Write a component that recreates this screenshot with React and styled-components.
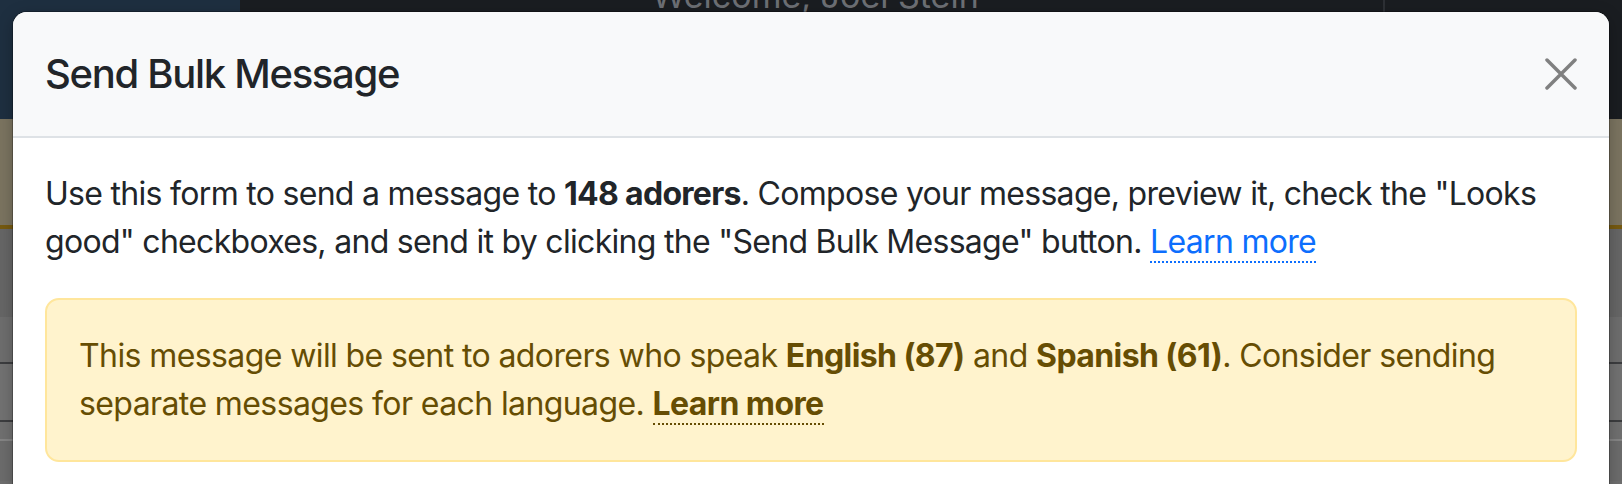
import styled, { createGlobalStyle } from "styled-components";

const GlobalStyle = createGlobalStyle`
  html, body {
    margin: 0;
    padding: 0;
    background: #6f6f6f;
  }
  * {
    box-sizing: border-box;
  }
`;

const Page = styled.div`
  position: relative;
  width: 1622px;
  height: 484px;
  overflow: hidden;
  font-family: Inter, "Noto Sans", sans-serif;
`;

const TopBar = styled.header`
  display: flex;
  height: 119px;
`;

const Brand = styled.div`
  width: 240px;
  background: #1e2f40;
`;

const Nav = styled.nav`
  flex: 1;
  display: flex;
  background: #1a1d21;
`;

const Welcome = styled.div`
  flex: 1;
  padding-left: 412px;
  margin-top: -21px;
  font-size: 34px;
  line-height: 1;
  color: #6c6f74;
  white-space: nowrap;
`;

const NavAside = styled.div`
  width: 239px;
  border-left: 2px solid #2d3035;
`;

const Band = styled.div`
  height: 110px;
  background: #7b7460;
  border-bottom: 4px solid #765a10;
`;

const Section = styled.div`
  height: ${(p) => p.$h}px;
  background: ${(p) => p.$bg};
  border-bottom: ${(p) => (p.$line ? `2px solid ${p.$line}` : "none")};
`;

const Modal = styled.div`
  position: absolute;
  top: 12px;
  left: 13px;
  width: 1596px;
  background: #fff;
  border-radius: 14px;
  box-shadow: 0 0 0 1px rgba(0, 0, 0, 0.25), 0 4px 16px rgba(0, 0, 0, 0.25);
  overflow: hidden;
`;

const ModalHeader = styled.div`
  display: flex;
  align-items: center;
  justify-content: space-between;
  padding: 32px;
  background: #f8f9fa;
  border-bottom: 2px solid #dee2e6;
`;

const Title = styled.h5`
  margin: 0;
  font-size: 40px;
  font-weight: 500;
  line-height: 60px;
  letter-spacing: -1.3px;
  color: #212529;
`;

const CloseButton = styled.button`
  width: 32px;
  height: 32px;
  padding: 0;
  border: 0;
  background: transparent;
  display: flex;
  align-items: center;
  justify-content: center;
  cursor: pointer;
`;

const ModalBody = styled.div`
  padding: 32px 32px 40px;
  font-size: 32px;
  line-height: 48px;
  letter-spacing: -0.6px;
`;

const Intro = styled.p`
  margin: 0 0 32px;
  color: #212529;
  letter-spacing: -0.7px;
`;

const TextLink = styled.a`
  color: #0d6efd;
  text-decoration: none;
  border-bottom: 2px dotted #0d6efd;
`;

const Alert = styled.div`
  padding: 32px;
  background: #fff3cd;
  border: 2px solid #ffe69c;
  border-radius: 14px;
  color: #664d03;
`;

const AlertLink = styled.a`
  color: #664d03;
  font-weight: 700;
  text-decoration: none;
  border-bottom: 2px dotted #664d03;
`;

export default function App() {
  return (
    <>
      <GlobalStyle />
      <Page>
        <TopBar>
          <Brand />
          <Nav>
            <Welcome>Welcome, Joel Stein</Welcome>
            <NavAside />
          </Nav>
        </TopBar>
        <Band />
        <Section $h={88} $bg="#666666" />
        <Section $h={47} $bg="#6e6e6e" $line="#3c3d3f" />
        <Section $h={58} $bg="#727272" $line="#3c3d3f" />
        <Section $h={19} $bg="#707070" $line="#858585" />
        <Section $h={40} $bg="#6c6c6c" />

        <Modal>
          <ModalHeader>
            <Title>Send Bulk Message</Title>
            <CloseButton aria-label="Close">
              <svg width="32" height="32" viewBox="0 0 32 32">
                <path
                  d="M2 2 L30 30 M30 2 L2 30"
                  stroke="#808080"
                  strokeWidth="3.5"
                  strokeLinecap="round"
                  fill="none"
                />
              </svg>
            </CloseButton>
          </ModalHeader>
          <ModalBody>
            <Intro>
              Use this form to send a message to <b>148 adorers</b>. Compose
              your message, preview it, check the "Looks good" checkboxes, and
              send it by clicking the "Send Bulk Message" button.{" "}
              <TextLink href="#">Learn more</TextLink>
            </Intro>
            <Alert>
              This message will be sent to adorers who speak{" "}
              <b>English (87)</b> and <b>Spanish (61)</b>. Consider sending
              separate messages for each language.{" "}
              <AlertLink href="#">Learn more</AlertLink>
            </Alert>
          </ModalBody>
        </Modal>
      </Page>
    </>
  );
}
